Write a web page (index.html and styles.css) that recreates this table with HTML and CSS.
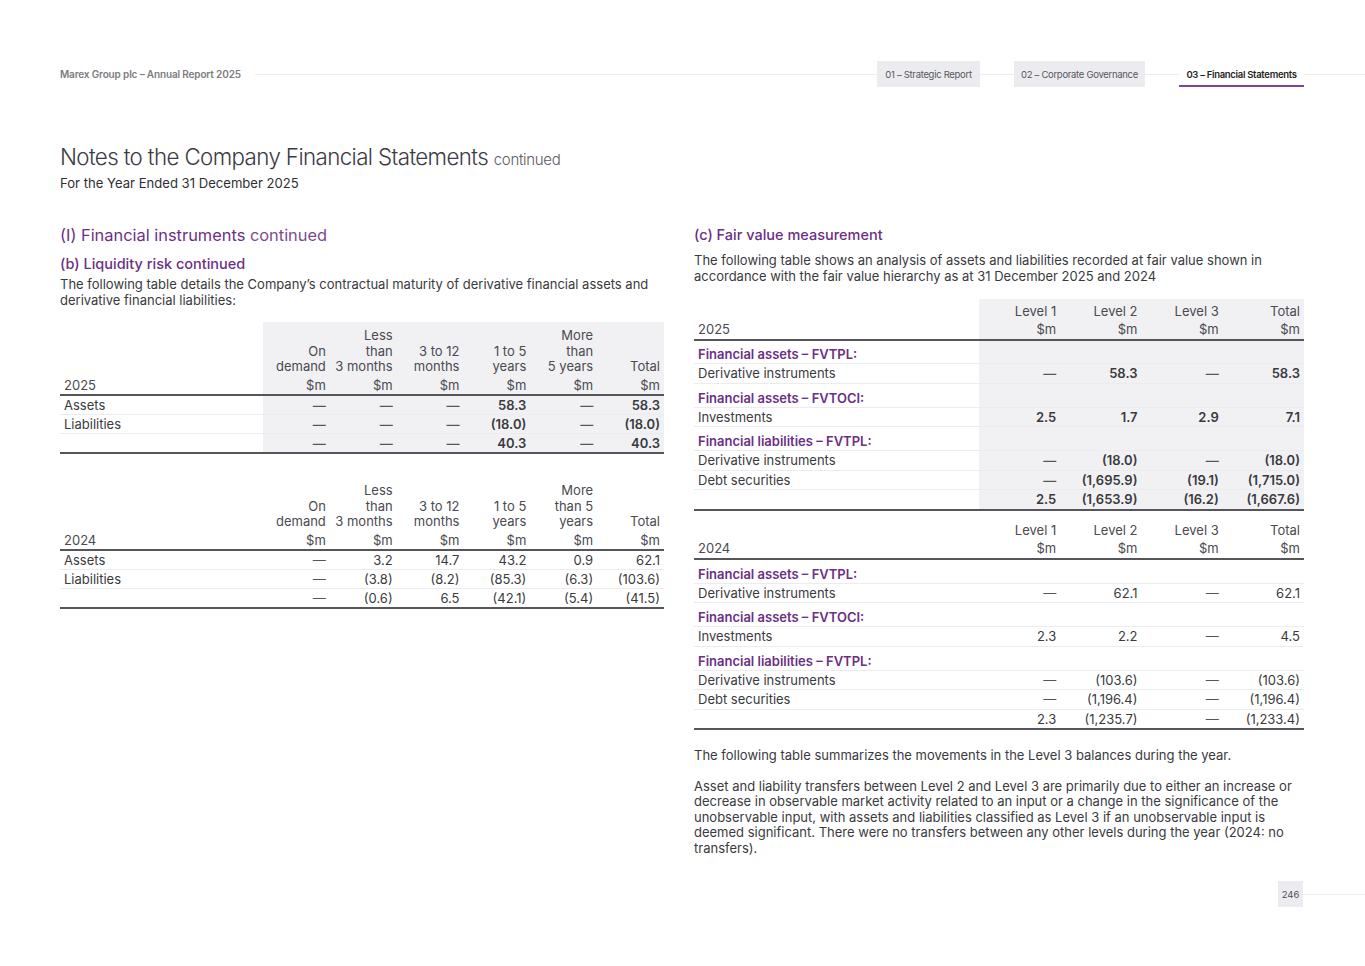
FILE: index.html
```html
<!DOCTYPE html>
<html lang="en">
<head>
<meta charset="utf-8">
<title>Notes to the Company Financial Statements</title>
<link rel="stylesheet" href="styles.css">
</head>
<body>
<header class="topbar">
  <div class="brand">Marex Group plc – Annual Report 2025</div>
  <nav class="tabs">
    <a class="tab">01 – Strategic Report</a>
    <a class="tab">02 – Corporate Governance</a>
    <a class="tab active">03 – Financial Statements</a>
  </nav>
</header>

<main class="page">
  <h1 class="title">Notes to the Company Financial Statements <span class="cont">continued</span></h1>
  <p class="subtitle">For the Year Ended 31 December 2025</p>

  <div class="columns">
    <section class="col">
      <h2 class="h2">(I) Financial instruments <span class="light">continued</span></h2>
      <h3 class="h3">(b) Liquidity risk continued</h3>
      <p class="para">The following table details the Company’s contractual maturity of derivative financial assets and derivative financial liabilities:</p>

      <table class="tbl maturity shaded">
        <colgroup><col class="lab"><col><col><col><col><col><col></colgroup>
        <thead>
          <tr>
            <th class="lab"><span class="unit">2025</span></th>
            <th>On<br>demand<span class="unit">$m</span></th>
            <th>Less<br>than<br>3 months<span class="unit">$m</span></th>
            <th>3 to 12<br>months<span class="unit">$m</span></th>
            <th>1 to 5<br>years<span class="unit">$m</span></th>
            <th>More<br>than<br>5 years<span class="unit">$m</span></th>
            <th>Total<span class="unit">$m</span></th>
          </tr>
        </thead>
        <tbody class="bold">
          <tr><td class="lab">Assets</td><td class="d">—</td><td class="d">—</td><td class="d">—</td><td>58.3</td><td class="d">—</td><td>58.3</td></tr>
          <tr><td class="lab">Liabilities</td><td class="d">—</td><td class="d">—</td><td class="d">—</td><td>(18.0)</td><td class="d">—</td><td>(18.0)</td></tr>
          <tr class="total"><td class="lab"></td><td class="d">—</td><td class="d">—</td><td class="d">—</td><td>40.3</td><td class="d">—</td><td>40.3</td></tr>
        </tbody>
      </table>

      <table class="tbl maturity second">
        <colgroup><col class="lab"><col><col><col><col><col><col></colgroup>
        <thead>
          <tr>
            <th class="lab"><span class="unit">2024</span></th>
            <th>On<br>demand<span class="unit">$m</span></th>
            <th>Less<br>than<br>3 months<span class="unit">$m</span></th>
            <th>3 to 12<br>months<span class="unit">$m</span></th>
            <th>1 to 5<br>years<span class="unit">$m</span></th>
            <th>More<br>than 5<br>years<span class="unit">$m</span></th>
            <th>Total<span class="unit">$m</span></th>
          </tr>
        </thead>
        <tbody>
          <tr><td class="lab">Assets</td><td class="d">—</td><td>3.2</td><td>14.7</td><td>43.2</td><td>0.9</td><td>62.1</td></tr>
          <tr><td class="lab">Liabilities</td><td class="d">—</td><td>(3.8)</td><td>(8.2)</td><td>(85.3)</td><td>(6.3)</td><td>(103.6)</td></tr>
          <tr class="total"><td class="lab"></td><td class="d">—</td><td>(0.6)</td><td>6.5</td><td>(42.1)</td><td>(5.4)</td><td>(41.5)</td></tr>
        </tbody>
      </table>
    </section>

    <section class="col">
      <h3 class="h3 fair">(c) Fair value measurement</h3>
      <p class="para intro">The following table shows an analysis of assets and liabilities recorded at fair value shown in accordance with the fair value hierarchy as at 31 December 2025 and 2024</p>

      <table class="tbl fv shaded">
        <colgroup><col class="lab"><col><col><col><col></colgroup>
        <thead>
          <tr>
            <th class="lab"><span class="unit">2025</span></th>
            <th>Level 1<span class="unit">$m</span></th>
            <th>Level 2<span class="unit">$m</span></th>
            <th>Level 3<span class="unit">$m</span></th>
            <th>Total<span class="unit">$m</span></th>
          </tr>
        </thead>
        <tbody class="bold">
          <tr class="cat"><td class="lab">Financial assets – FVTPL:</td><td></td><td></td><td></td><td></td></tr>
          <tr><td class="lab">Derivative instruments</td><td class="d">—</td><td>58.3</td><td class="d">—</td><td>58.3</td></tr>
          <tr class="cat"><td class="lab">Financial assets – FVTOCI:</td><td></td><td></td><td></td><td></td></tr>
          <tr><td class="lab">Investments</td><td>2.5</td><td>1.7</td><td>2.9</td><td>7.1</td></tr>
          <tr class="cat"><td class="lab">Financial liabilities – FVTPL:</td><td></td><td></td><td></td><td></td></tr>
          <tr><td class="lab">Derivative instruments</td><td class="d">—</td><td>(18.0)</td><td class="d">—</td><td>(18.0)</td></tr>
          <tr><td class="lab">Debt securities</td><td class="d">—</td><td>(1,695.9)</td><td>(19.1)</td><td>(1,715.0)</td></tr>
          <tr class="total"><td class="lab"></td><td>2.5</td><td>(1,653.9)</td><td>(16.2)</td><td>(1,667.6)</td></tr>
        </tbody>
      </table>

      <table class="tbl fv second-fv">
        <colgroup><col class="lab"><col><col><col><col></colgroup>
        <thead>
          <tr>
            <th class="lab"><span class="unit">2024</span></th>
            <th>Level 1<span class="unit">$m</span></th>
            <th>Level 2<span class="unit">$m</span></th>
            <th>Level 3<span class="unit">$m</span></th>
            <th>Total<span class="unit">$m</span></th>
          </tr>
        </thead>
        <tbody>
          <tr class="cat"><td class="lab">Financial assets – FVTPL:</td><td></td><td></td><td></td><td></td></tr>
          <tr><td class="lab">Derivative instruments</td><td class="d">—</td><td>62.1</td><td class="d">—</td><td>62.1</td></tr>
          <tr class="cat"><td class="lab">Financial assets – FVTOCI:</td><td></td><td></td><td></td><td></td></tr>
          <tr><td class="lab">Investments</td><td>2.3</td><td>2.2</td><td class="d">—</td><td>4.5</td></tr>
          <tr class="cat"><td class="lab">Financial liabilities – FVTPL:</td><td></td><td></td><td></td><td></td></tr>
          <tr><td class="lab">Derivative instruments</td><td class="d">—</td><td>(103.6)</td><td class="d">—</td><td>(103.6)</td></tr>
          <tr><td class="lab">Debt securities</td><td class="d">—</td><td>(1,196.4)</td><td class="d">—</td><td>(1,196.4)</td></tr>
          <tr class="total"><td class="lab"></td><td>2.3</td><td>(1,235.7)</td><td class="d">—</td><td>(1,233.4)</td></tr>
        </tbody>
      </table>

      <p class="para after">The following table summarizes the movements in the Level 3 balances during the year.</p>
      <p class="para after2">Asset and liability transfers between Level 2 and Level 3 are primarily due to either an increase or decrease in observable market activity related to an input or a change in the significance of the unobservable input, with assets and liabilities classified as Level 3 if an unobservable input is deemed significant. There were no transfers between any other levels during the year (2024: no transfers).</p>
    </section>
  </div>
</main>

<footer class="footer">
  <span class="pagenum">246</span>
</footer>
</body>
</html>
```

FILE: styles.css
```css
* { box-sizing: border-box; }

html, body {
  margin: 0;
  padding: 0;
  background: #ffffff;
}

body {
  font-family: "Inter", "Liberation Sans", sans-serif;
  color: #3a3a3a;
  width: 1365px;
}

/* ---------- top bar ---------- */
.topbar {
  display: flex;
  align-items: center;
  height: 26px;
  margin-top: 61px;
  padding-left: 60px;
  background: linear-gradient(#ededf0, #ededf0) no-repeat 60px 13px / calc(100% - 60px) 1px;
}

.brand {
  font-size: 10px;
  font-weight: 600;
  color: #7c7c80;
  background: #fff;
  padding-right: 14px;
  letter-spacing: -0.15px;
}

.tabs {
  display: flex;
  gap: 34px;
  margin-left: auto;
  margin-right: 61px;
  height: 26px;
}

.tab {
  display: flex;
  align-items: center;
  justify-content: center;
  height: 26px;
  font-size: 9.5px;
  color: #57575c;
  background: #ececf0;
  letter-spacing: -0.3px;
}
.tab:nth-child(1) { width: 103px; }
.tab:nth-child(2) { width: 131px; }
.tab:nth-child(3) { width: 125px; }

.tab.active {
  background: #fff;
  color: #1f1f24;
  font-weight: 600;
  border-bottom: 2px solid #7b4599;
  padding-top: 2px;
}

/* ---------- page ---------- */
.page {
  padding: 0 61px 0 60px;
}

.title {
  margin: 55px 0 0;
  font-size: 22.3px;
  font-weight: 300;
  color: #3b3b44;
  letter-spacing: -0.6px;
  line-height: 30px;
}
.title .cont {
  font-size: 15px;
  letter-spacing: -0.3px;
  color: #5a5a62;
}

.subtitle {
  margin: 0;
  font-size: 13.1px;
  color: #2f2f33;
  line-height: 16px;
}

.columns {
  display: grid;
  grid-template-columns: 604px 610px;
  column-gap: 30px;
  margin-top: 33px;
}

.h2 {
  margin: 0;
  font-size: 16.4px;
  font-weight: 400;
  color: #6b2f86;
  line-height: 22px;
}
.h2 .light { color: #7b4a92; }

.h3 {
  margin: 9px 0 0;
  font-size: 14.5px;
  font-weight: 500;
  color: #6b2f86;
  line-height: 18px;
}
.h3.fair { margin-top: 2px; }

.para {
  margin: 4px 0 0;
  font-size: 13px;
  line-height: 15.5px;
  color: #3a3a3e;
}
.para.intro { margin-top: 9px; }

.para.after { margin-top: 18px; }
.para.after2 { margin-top: 15px; }

/* ---------- tables ---------- */
.tbl {
  width: 100%;
  border-collapse: collapse;
  table-layout: fixed;
  font-size: 13px;
  color: #3a3a3e;
}

.tbl th {
  font-weight: 400;
  text-align: right;
  vertical-align: bottom;
  color: #4a4a50;
  line-height: 15.5px;
  padding: 6px 4px 1px 0;
  border-bottom: 2px solid #55555b;
}

.tbl th .unit {
  display: block;
  margin-top: 3px;
}

.tbl th.lab, .tbl td.lab {
  text-align: left;
  padding-left: 4px;
}

.tbl td {
  text-align: right;
  padding: 0 4px 0 0;
  height: 19px;
  line-height: 18px;
  border-bottom: 1px solid #ececef;
  white-space: nowrap;
}

.tbl tbody.bold td { font-weight: 600; }
.tbl tbody.bold td.lab { font-weight: 400; }

.tbl td.d { color: #55555a; }

.tbl tr.total td {
  border-top: 1px solid #6a6a70;
  border-bottom: 2px solid #55555b;
}

.tbl.shaded th:not(.lab),
.tbl.shaded td:not(.lab) {
  background: #f1f1f4;
}

.maturity { margin-top: 14px; }
.maturity col.lab { width: 203px; }
.maturity.second { margin-top: 23px; }

.fv { margin-top: 15px; }
.fv col.lab { width: 285px; }
.fv th { padding-top: 5px; padding-bottom: 1px; }
.fv th .unit { margin-top: 2.5px; }
.fv td { height: 19.5px; }
.fv tr.total td { height: 20px; }
.fv.second-fv { margin-top: 4px; }
.fv.second-fv th { padding-top: 8px; padding-bottom: 2px; }

.fv tr.cat td {
  height: 24px;
  line-height: 16px;
  padding-top: 5px;
  vertical-align: middle;
}
.fv tr.cat td.lab {
  color: #6b2f86;
  font-weight: 600;
}

/* ---------- footer ---------- */
.footer {
  display: flex;
  justify-content: flex-end;
  margin-top: 25px;
  background: linear-gradient(#ededf0, #ededf0) no-repeat 1303px 13px / 62px 1px;
  height: 26px;
}

.pagenum {
  display: flex;
  align-items: center;
  justify-content: center;
  width: 25px;
  height: 26px;
  margin-right: 62px;
  background: #ececf0;
  font-size: 9.5px;
  color: #4f4f58;
}
```
